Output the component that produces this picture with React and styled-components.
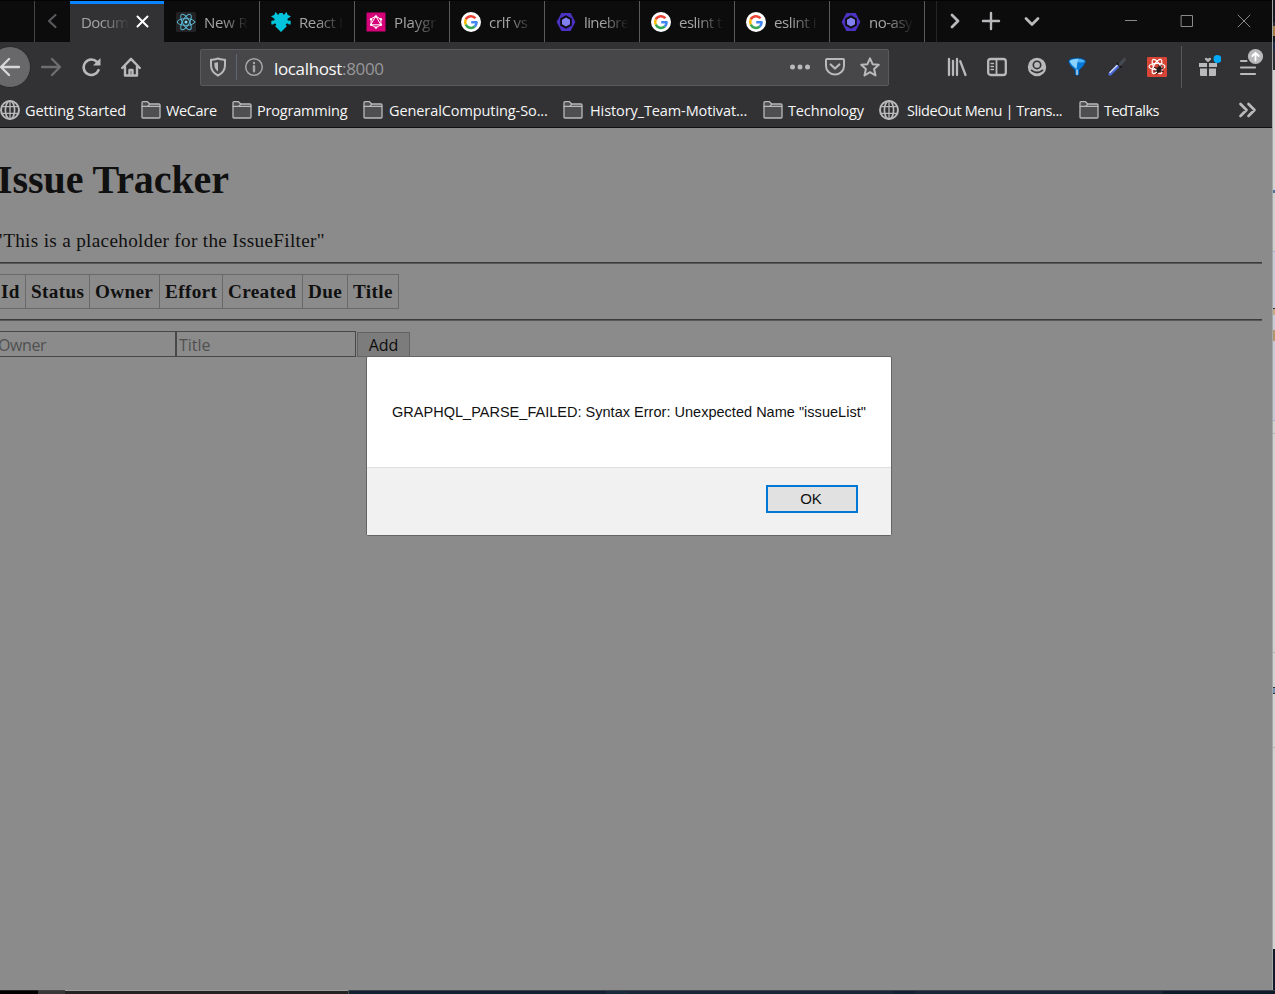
import React from "react";
import styled, { createGlobalStyle } from "styled-components";

const Global = createGlobalStyle`
  * { box-sizing: border-box; }
  html, body { margin: 0; padding: 0; overflow: hidden; }
  body { background: #101a26; }
`;

const Desktop = styled.div`
  display: grid;
  grid-template-columns: 1272px 3px;
  grid-template-rows: 990px 4px;
  width: 1275px;
  height: 994px;
  overflow: hidden;
`;

const Window = styled.div`
  position: relative;
  display: flex;
  flex-direction: column;
  overflow: hidden;
  background: #8b8b8b;
  font-family: "Open Sans", "Noto Sans", sans-serif;
`;

const TabStrip = styled.div`
  display: flex;
  flex: none;
  height: 42px;
  background: #0c0c0d;
  border-top: 1px solid #030303;
`;

const StripStart = styled.div`
  flex: none;
  width: 35px;
  border-right: 1px solid #454546;
`;

const StripButton = styled.button`
  display: flex;
  align-items: center;
  justify-content: center;
  flex: none;
  width: ${(p) => p.$w}px;
  padding: 0 1px 1px 0;
  border: 0;
  background: none;
`;

const Tab = styled.div`
  display: flex;
  align-items: center;
  flex: none;
  width: 95px;
  padding: 0 0 0 11px;
  gap: 8px;
  border-right: 1px solid #5a5a5b;
`;

const ActiveTab = styled(Tab)`
  width: 94px;
  margin-right: 1px;
  gap: 6px;
  border-right: 0;
  border-top: 3px solid #0a84ff;
  padding-bottom: 3px;
  background: #323234;
`;

const TabLabel = styled.span`
  flex: none;
  width: ${(p) => p.$w || 45}px;
  white-space: nowrap;
  font-size: 15px;
  line-height: 24px;
  letter-spacing: ${(p) => p.$ls}px;
  color: #a5a5a7;
  padding-top: 1px;
  -webkit-mask-image: linear-gradient(to right, #000 40%, transparent 100%);
  mask-image: linear-gradient(to right, #000 40%, transparent 100%);
`;

const StripEdge = styled.div`
  flex: none;
  width: 12px;
  border-right: 1px solid #252526;
`;

const WindowControls = styled.div`
  display: flex;
  flex: none;
  margin-left: 49px;
`;

const NavBar = styled.div`
  display: flex;
  flex: none;
  align-items: center;
  height: 51px;
  background: #323234;
`;

const BackButton = styled.button`
  display: flex;
  align-items: center;
  justify-content: flex-end;
  flex: none;
  width: 42px;
  height: 42px;
  margin: 0 0 1px -11px;
  padding: 0 10px 0 0;
  border: 1px solid #29292b;
  border-radius: 50%;
  background: #68686a;
`;

const NavButton = styled.button`
  display: flex;
  align-items: center;
  justify-content: center;
  flex: none;
  width: 40px;
  height: 40px;
  margin-bottom: 1px;
  padding: 0;
  border: 0;
  background: none;
`;

const UrlBar = styled.div`
  display: flex;
  align-items: center;
  flex: none;
  width: 689px;
  height: 37px;
  margin: 0 48px 0 49px;
  padding-bottom: 1px;
  border: 1px solid #5a5a5c;
  border-radius: 2px;
  background: #474749;
`;

const UrlDivider = styled.div`
  width: 1px;
  height: 26px;
  margin: 0 7px 0 1px;
  background: #5d6673;
`;

const Url = styled.span`
  flex: 1;
  margin-left: 10px;
  padding-top: 3px;
  font-size: 17px;
  line-height: 26px;
  letter-spacing: -0.35px;
  color: #f9f9fa;
`;

const Port = styled.span`
  color: #97979a;
`;

const UrlActions = styled.div`
  display: flex;
  align-items: center;
  gap: 15px;
  margin-right: 8px;
`;

const ToolDivider = styled.div`
  width: 1px;
  height: 42px;
  margin: 0 6px 1px 4px;
  background: #58585a;
`;

const BookmarksBar = styled.div`
  display: flex;
  flex: none;
  align-items: center;
  height: 35px;
  background: #323234;
  border-bottom: 1px solid #111112;
`;

const Bookmark = styled.div`
  display: flex;
  align-items: center;
  flex: none;
  width: ${(p) => p.$w}px;
  gap: ${(p) => p.$gap || 5}px;
  white-space: nowrap;
  font-size: 14.5px;
  line-height: 22px;
  letter-spacing: ${(p) => p.$ls}px;
  color: #f6f6f7;
`;

const BookmarkLabel = styled.span`
  padding-top: 2px;
`;

const Page = styled.main`
  flex: 1;
  padding: 0 10px 0 0;
  margin-left: -2px;
  font-family: "Liberation Serif", serif;
  font-size: 19.2px;
  color: #101010;
`;

const Heading = styled.h1`
  margin: 0;
  padding-top: 30px;
  text-indent: -1px;
  font-size: 40px;
  line-height: 44px;
  letter-spacing: -0.08px;
`;

const Placeholder = styled.div`
  margin-top: 28px;
  height: 32px;
  text-indent: -3px;
  line-height: 22px;
  letter-spacing: 0.32px;
`;

const Rule = styled.div`
  height: 2px;
  border-top: 1px solid #3b3b3b;
  background: #585858;
`;

const HeaderRow = styled.div`
  display: flex;
  width: 401px;
  height: 35px;
  margin: 10px 0;
  border: 1px solid #696969;
  border-right: 0;
`;

const HeaderCell = styled.div`
  flex: none;
  width: ${(p) => p.$w}px;
  padding-left: ${(p) => p.$pad || 5}px;
  border-right: 1px solid #696969;
  font-weight: bold;
  line-height: 33px;
  letter-spacing: 0.35px;
  white-space: nowrap;
`;

const Form = styled.div`
  display: flex;
  align-items: flex-start;
  padding-top: 10px;
`;

const Field = styled.input`
  width: ${(p) => p.$w}px;
  height: 26px;
  padding: 2px 2px 0 ${(p) => p.$pad}px;
  border: 1px solid #484848;
  border-radius: 0;
  outline: none;
  background: #8b8b8b;
  font: 16px "Open Sans", sans-serif;
  letter-spacing: ${(p) => p.$ls}px;
  text-indent: ${(p) => p.$indent || 0}px;
  &::placeholder { color: #505050; opacity: 1; }
`;

const AddButton = styled.button`
  width: 53px;
  height: 25px;
  margin: 1px 0 0 1px;
  padding: 1px 0 0;
  border: 1px solid #626262;
  background: #7c7c7c;
  font: 16px/20px "Open Sans", sans-serif;
  color: #0c0c0c;
`;

const Dialog = styled.div`
  position: absolute;
  left: 366px;
  top: 356px;
  display: flex;
  flex-direction: column;
  width: 526px;
  height: 180px;
  border: 1px solid #656565;
  border-radius: 2px;
  background: #fff;
  font-family: "Liberation Sans", sans-serif;
  font-size: 14.5px;
  color: #111;
`;

const Message = styled.div`
  height: 110px;
  padding-left: 25px;
  line-height: 110px;
  white-space: nowrap;
  letter-spacing: 0.02px;
`;

const DialogFooter = styled.div`
  display: flex;
  justify-content: flex-end;
  flex: 1;
  padding: 17px 33px 0 0;
  border-top: 1px solid #dfdfdf;
  background: #f1f1f1;
`;

const OkButton = styled.button`
  width: 92px;
  height: 28px;
  padding: 0 2px 1px 0;
  border: 2px solid #0078d7;
  background: #e1e1e1;
  font: 15px "Liberation Sans", sans-serif;
  color: #111;
`;

const Side = styled.div`
  display: flex;
  flex-direction: column;
  border-left: 1px solid #a6a6a6;
`;

const Slice = styled.div`
  flex: none;
  height: ${(p) => p.$h}px;
  background: ${(p) => p.$c};
`;

const Bottom = styled.div`
  grid-column: 1 / 3;
  display: flex;
`;

const Segment = styled.div`
  width: ${(p) => p.$w}px;
  background: ${(p) => p.$c};
  border-top: 1px solid ${(p) => p.$t};
`;

const Svg = styled.svg`
  flex: none;
  fill: none;
  stroke-linecap: round;
  stroke-linejoin: round;
`;

const Icon = ({ size = 20, color = "#b9b9bb", sw = 2, children, box = "0 0 20 20" }) => (
  <Svg width={size} height={size} viewBox={box} stroke={color} strokeWidth={sw}>
    {children}
  </Svg>
);

const Globe = () => (
  <Icon sw={1.7}>
    <circle cx="10" cy="10" r="9" strokeWidth="2" />
    <ellipse cx="10" cy="10" rx="4.6" ry="9" />
    <path d="M10 1v18M1.8 6.6h16.4M1.8 13.4h16.4" strokeWidth="1.3" />
  </Icon>
);

const Folder = () => (
  <Icon sw={1.3}>
    <path d="M1 17.5V2.7q0-1 1-1h4.5L8.7 4H18q1 0 1 1v12.2q0 .8-1 .8H2q-1 0-1-.8z" fill="#4f4f51" />
    <path d="M1.2 6.4h5.6L8.6 4.3" />
    <path d="M6.8 6.4h12" />
  </Icon>
);

const ReactLogo = () => (
  <Icon color="#5ab8d4" sw={1}>
    <rect width="20" height="20" rx="1.5" fill="#222224" stroke="none" />
    {[30, 90, 150].map((a) => (
      <ellipse key={a} cx="10" cy="10" rx="8.8" ry="3.4" transform={`rotate(${a - 30} 10 10)`} />
    ))}
    <circle cx="10" cy="10" r="1.5" fill="#79dcf5" stroke="none" />
  </Icon>
);

const Puzzle = () => (
  <Icon>
    <path
      stroke="none"
      fill="#00c4dc"
      d="M4.5 0 7 2.8Q8.6 2.6 8.2 1h3.600Q11.400 2.600 13 2.800L15.500 0l1.300 3L20 4.200 16.300 7q.2 1.500 1.200 1.800 1.300-.6 2.200.3v3.200q-1.500.8-2.600-.6-1.300-.6-2.300.3-.3 1.500 1.200 2L10 20l-6-6q1.500-.5 1.200-2-1-.9-2.300-.3-1.100 1.400-2.600.6V9.100q.9-.9 2.200-.3 1-.3 1.200-1.800L0 4.200 3.200 3z"
    />
  </Icon>
);

const GraphQL = () => (
  <Icon color="#fff" sw={1}>
    <rect x=".5" y=".5" width="19" height="19" rx=".5" fill="#d60078" stroke="none" />
    <path d="M10 4.4 14.9 7.2v5.6L10 15.6 5.1 12.8V7.2zM10 4.4 14.9 12.8H5.1z" />
    {[[10, 4.4], [14.9, 7.2], [14.9, 12.8], [10, 15.6], [5.1, 12.8], [5.1, 7.2]].map(([x, y]) => (
      <circle key={`${x}-${y}`} cx={x} cy={y} r="1.2" fill="#fff" stroke="none" />
    ))}
  </Icon>
);

const Google = () => (
  <Icon sw={2.5}>
    <circle cx="10" cy="10" r="10" fill="#fff" stroke="none" />
    <g strokeLinecap="butt">
      <path stroke="#ea4335" d="M14.5 6.3A5.8 5.8 0 0 0 4.8 7.4" />
      <path stroke="#fbbc05" d="M4.8 7.4a5.8 5.8 0 0 0 0 5.2" />
      <path stroke="#34a853" d="M4.8 12.6a5.8 5.8 0 0 0 9 1.9" />
      <path stroke="#4285f4" d="M13.8 14.5A5.8 5.8 0 0 0 15.6 10.2H10.2" />
    </g>
  </Icon>
);

const Eslint = () => (
  <Icon>
    <path d="M5.4 1h9.2L19.4 10l-4.8 9H5.4L.6 10z" fill="#4b32c3" stroke="none" />
    <path d="M10 3.3 15.8 6.6v6.8L10 16.7l-5.8-3.3V6.6z" fill="#0c0c0d" stroke="none" />
    <path d="M10 5.4l4 2.3v4.6l-4 2.3-4-2.3V7.7z" fill="#8080f2" stroke="none" />
  </Icon>
);

const TABS = [
  { icon: <ReactLogo />, label: "New R", ls: -0.2 },
  { icon: <Puzzle />, label: "React I", ls: -0.4 },
  { icon: <GraphQL />, label: "Playgr", ls: -0.1 },
  { icon: <Google />, label: "crlf vs", ls: -0.3 },
  { icon: <Eslint />, label: "linebre", ls: -0.6 },
  { icon: <Google />, label: "eslint t", ls: -0.5 },
  { icon: <Google />, label: "eslint i", ls: -0.4 },
  { icon: <Eslint />, label: "no-asy", ls: -0.5 },
];

const BOOKMARKS = [
  { icon: <Globe />, label: "Getting Started", w: 141, ls: -0.1 },
  { icon: <Folder />, label: "WeCare", w: 91, ls: -0.35 },
  { icon: <Folder />, label: "Programming", w: 131, ls: -0.2 },
  { icon: <Folder />, label: "GeneralComputing-So...", w: 200, gap: 6, ls: -0.09 },
  { icon: <Folder />, label: "History_Team-Motivat...", w: 200, gap: 7, ls: -0.1 },
  { icon: <Folder />, label: "Technology", w: 116, ls: -0.13 },
  { icon: <Globe />, label: "SlideOut Menu | Trans...", w: 200, gap: 8, ls: -0.41 },
  { icon: <Folder />, label: "TedTalks", w: 158, ls: -0.55 },
];

const COLUMNS = [
  { label: "Id", w: 27, pad: 2 },
  { label: "Status", w: 64 },
  { label: "Owner", w: 70 },
  { label: "Effort", w: 63 },
  { label: "Created", w: 80 },
  { label: "Due", w: 45 },
  { label: "Title", w: 51 },
];

const SIDE = [
  [22, "#141a22"], [4, "#252c36"], [10, "#a08047"], [6, "#141a22"], [8, "#1d2c42"], [20, "#2a2c35"], [120, "#d2d2d2"], [3, "#4a76a0"], [58, "#cfcfcf"],
  [1, "#9fb2cc"], [56, "#c5cad4"], [1, "#333"], [6, "#c6a98a"], [15, "#c5cad4"], [11, "#b29871"], [79, "#c5cad4"],
  [1, "#9fb2cc"], [12, "#d2d2d2"], [1, "#b0b0b0"], [218, "#d2d2d2"], [1, "#b0b0b0"], [34, "#d2d2d2"],
  [1, "#333"], [5, "#7395b4"], [1, "#333"], [53, "#d2d2d2"], [1, "#b0b0b0"], [201, "#d2d2d2"], [41, "#101b2a"],
];

const BOTTOM = [
  [38, "#000", "#222"], [27, "#383838", "#444"], [283, "#232323", "#9d9d9d"], [1, "#4a4a4a", "#666"],
  [257, "#122031", "#39414c"], [22, "#1b2a3b", "#39414c"], [265, "#1a2536", "#39414c"], [22, "#122031", "#39414c"],
  [248, "#1a2536", "#39414c"], [112, "#101b2a", "#39414c"],
];

export default function App() {
  return (
    <Desktop>
      <Global />
      <Window>
        <TabStrip>
          <StripStart />
          <StripButton $w={35} aria-label="Scroll left">
            <Icon color="#59595b" sw={2.2}><path d="M13.5 4 7 10l6.5 6" /></Icon>
          </StripButton>
          <ActiveTab>
            <TabLabel $w={49} $ls={-0.6}>Docum</TabLabel>
            <Icon size={13} color="#fff" sw={2} box="0 0 13 13"><path d="M1.5 1.5l10 10M11.5 1.5l-10 10" /></Icon>
          </ActiveTab>
          {TABS.map((t) => (
            <Tab key={t.label}>
              {t.icon}
              <TabLabel $ls={t.ls}>{t.label}</TabLabel>
            </Tab>
          ))}
          <StripEdge />
          <StripButton $w={36} aria-label="Scroll right">
            <Icon sw={2.8}><path d="M7 4l6 6-6 6" /></Icon>
          </StripButton>
          <StripButton $w={37} aria-label="New tab">
            <Icon sw={2.4}><path d="M10 2v16M2 10h16" /></Icon>
          </StripButton>
          <StripButton $w={44} aria-label="All tabs">
            <Icon sw={2.8}><path d="M4 7.5l6 6 6-6" /></Icon>
          </StripButton>
          <WindowControls>
            <StripButton $w={56} aria-label="Minimize">
              <Icon sw={1} color="#8a8a8b"><path d="M4 9.5h12" strokeLinecap="butt" /></Icon>
            </StripButton>
            <StripButton $w={57} aria-label="Maximize">
              <Icon sw={1} color="#8a8a8b"><path d="M4.5 4.5h11v11h-11z" /></Icon>
            </StripButton>
            <StripButton $w={57} aria-label="Close">
              <Icon sw={1} color="#8a8a8b"><path d="M4 4l12 12M16 4L4 16" /></Icon>
            </StripButton>
          </WindowControls>
        </TabStrip>

        <NavBar>
          <BackButton aria-label="Back">
            <Icon color="#d7d7d8" sw={2.3}><path d="M19 10H1M9 2L1 10l8 8" /></Icon>
          </BackButton>
          <NavButton aria-label="Forward">
            <Icon color="#6e6e70" sw={2.3}><path d="M1 10h18M11 2l8 8-8 8" /></Icon>
          </NavButton>
          <NavButton aria-label="Reload">
            <Icon sw={2.6}><path d="M17.5 13.2A7.7 7.7 0 1 1 16 5" /><path d="M19.5 1v7.5h-7.5z" fill="#b9b9bb" stroke="none" /></Icon>
          </NavButton>
          <NavButton aria-label="Home">
            <Icon sw={2.4}><path d="M1.2 11 10 1.8l8.8 9.2M4 9.5v9h12v-9" /><path d="M8.5 18v-5h3v5" /></Icon>
          </NavButton>
          <UrlBar>
            <Icon size={34} box="-7 -7 34 34" sw={2}>
              <path d="M10 1.5c2.5.9 4.5 1 7 1.3v5.4c0 4.8-2.7 8-7 10.3-4.3-2.3-7-5.5-7-10.3V2.8c2.5-.3 4.5-.4 7-1.3z" />
              <path d="M10 5.2v9.3c-2.2-1.6-3.6-3.6-3.6-6.2V5.8z" fill="#b9b9bb" stroke="none" />
            </Icon>
            <UrlDivider />
            <Icon sw={1.5} color="#a5a5a7"><circle cx="10" cy="10" r="8.3" /><path d="M10 9.3v5M10 6v.1" strokeWidth="2.4" /></Icon>
            <Url>localhost<Port>:8000</Port></Url>
            <UrlActions>
              <Icon><g fill="#b9b9bb" stroke="none"><circle cx="2.5" cy="10" r="2.5" /><circle cx="10" cy="10" r="2.5" /><circle cx="17.5" cy="10" r="2.5" /></g></Icon>
              <Icon><path d="M2 2h16q1 0 1 1v6a9 8.5 0 0 1-18 0V3q0-1 1-1z" /><path d="M5.7 7.5l4.3 4 4.3-4" strokeWidth="2.3" /></Icon>
              <Icon><path d="M10 1.3l2.6 5.9 6.2.6-4.7 4.2 1.4 6.5L10 15.2l-5.5 3.3L5.9 12 1.2 7.8l6.2-.6z" /></Icon>
            </UrlActions>
          </UrlBar>
          <NavButton aria-label="Library">
            <Icon sw={2.3}><path d="M2 2v16M6 4v14M10 2v16M13.2 4.2 18.5 18" /></Icon>
          </NavButton>
          <NavButton aria-label="Sidebar">
            <Icon sw={2.3}><rect x="1.2" y="2" width="17.6" height="16" rx="2.5" /><path d="M9.5 2.5v15" strokeWidth="1.8" /><path d="M4 6.5h2.5M4 9.5h2.5M4 12.5h2.5" strokeWidth="1.3" /></Icon>
          </NavButton>
          <NavButton aria-label="Account">
            <Icon>
              <circle cx="10" cy="10" r="9.2" fill="#b9b9bb" stroke="none" />
              <circle cx="10" cy="7.9" r="4.5" fill="#323234" stroke="none" />
              <circle cx="10" cy="7.9" r="2.9" fill="#b9b9bb" stroke="none" />
              <path d="M4.6 13.4Q10 17.6 15.4 13.4" stroke="#323234" strokeWidth="1.8" />
            </Icon>
          </NavButton>
          <NavButton aria-label="Filter extension">
            <Icon>
              <path d="M1 4.500Q2 .8 10 .8t9 3.700Q17.500 9 12.500 13v4.500L10 19l-2.200-1.500V13Q2.500 9 1 4.500z" fill="#0879d8" stroke="#17344f" strokeWidth=".8" />
              <path d="M2.500 4.500Q4 1.800 12 1.800 9.500 6 9.500 12 4.500 8.500 2.500 4.500z" fill="#8bd3ff" stroke="none" />
              <path d="M12 2q4.500.5 6 2.500-3 1.700-7.500.5z" fill="#4fb4f5" stroke="none" />
              <path d="M10 13v4.500" stroke="#bcd4e2" strokeWidth="1.500" />
            </Icon>
          </NavButton>
          <NavButton aria-label="Color picker extension">
            <Icon>
              <path d="M3 17l8-8" stroke="#4967d2" strokeWidth="3.4" />
              <path d="M3 15.500 10.500 8" stroke="#d3dcfa" strokeWidth="1.4" />
              <path d="M10.500 6.500l3.500 3.500" stroke="#17181c" strokeWidth="2" />
              <path d="M13.200 7.200l4.300-4.700" stroke="#454a51" strokeWidth="3.200" />
            </Icon>
          </NavButton>
          <NavButton aria-label="React developer tools">
            <Icon color="#fff" sw={1.2}>
              <rect width="20" height="20" rx="1" fill="#d84536" stroke="none" />
              {[0, 60, 120].map((a) => <ellipse key={a} cx="10" cy="9.5" rx="8" ry="3.2" transform={`rotate(${a} 10 9.5)`} />)}
              <g stroke="#231a19" strokeWidth="1">
                <ellipse cx="12" cy="12.5" rx="1.9" ry="2.8" fill="#231a19" transform="rotate(20 12 12.5)" />
                <path d="M7.5 10.5l3 1M7.3 14h3M9 17.5l2-2.5M16.5 11l-3 1M16.5 14.8l-3-1M11.5 8l1 1.5M14.5 8l-1 1.5" />
              </g>
            </Icon>
          </NavButton>
          <ToolDivider />
          <NavButton aria-label="What's new">
            <Icon size={26} box="-3 -3 26 26">
              <g fill="#b9b9bb" stroke="none">
                <path d="M1 6h8v4H1zM11 6h8v4h-8zM2 11.5h7V19H3q-1 0-1-1zM11 11.5h7V18q0 1-1 1h-6z" />
                <path d="M10 5.3 7 2.5q-.5-1.8 1-1.8 1.3 0 2 1.3Q10.7.7 12 .7q1.5 0 1 1.8z" />
                <circle cx="19.5" cy="2" r="4" fill="#00a8f8" />
              </g>
            </Icon>
          </NavButton>
          <NavButton aria-label="Menu">
            <Icon size={40} box="-10 -10 40 40" sw={2.2}>
              <path d="M3 4h5.5M3 10.5h14M3 17h14" />
              <circle cx="17.5" cy="-.5" r="7.6" fill="#b9b9bb" stroke="none" />
              <path d="M17.5 3.5v-7.5M14.3-1l3.2-3.2L20.7-1" stroke="#fff" strokeWidth="1.8" />
            </Icon>
          </NavButton>
        </NavBar>

        <BookmarksBar>
          {BOOKMARKS.map((b) => (
            <Bookmark key={b.label} $w={b.w} $gap={b.gap} $ls={b.ls}>{b.icon}<BookmarkLabel>{b.label}</BookmarkLabel></Bookmark>
          ))}
          <Icon sw={2.7}><path d="M3.500 4l6 6-6 6M11.500 4l6 6-6 6" /></Icon>
        </BookmarksBar>

        <Page>
          <Heading>Issue Tracker</Heading>
          <Placeholder>"This is a placeholder for the IssueFilter"</Placeholder>
          <Rule />
          <HeaderRow>
            {COLUMNS.map((c) => <HeaderCell key={c.label} $w={c.w} $pad={c.pad}>{c.label}</HeaderCell>)}
          </HeaderRow>
          <Rule />
          <Form>
            <Field $w={178} $pad={0} $indent={-1} $ls={-0.4} placeholder="Owner" />
            <Field $w={180} $pad={2} $ls={0} placeholder="Title" />
            <AddButton>Add</AddButton>
          </Form>
        </Page>

        <Dialog>
          <Message>GRAPHQL_PARSE_FAILED: Syntax Error: Unexpected Name "issueList"</Message>
          <DialogFooter><OkButton>OK</OkButton></DialogFooter>
        </Dialog>
      </Window>
      <Side>{SIDE.map(([h, c], i) => <Slice key={i} $h={h} $c={c} />)}</Side>
      <Bottom>{BOTTOM.map(([w, c, t], i) => <Segment key={i} $w={w} $c={c} $t={t} />)}</Bottom>
    </Desktop>
  );
}
